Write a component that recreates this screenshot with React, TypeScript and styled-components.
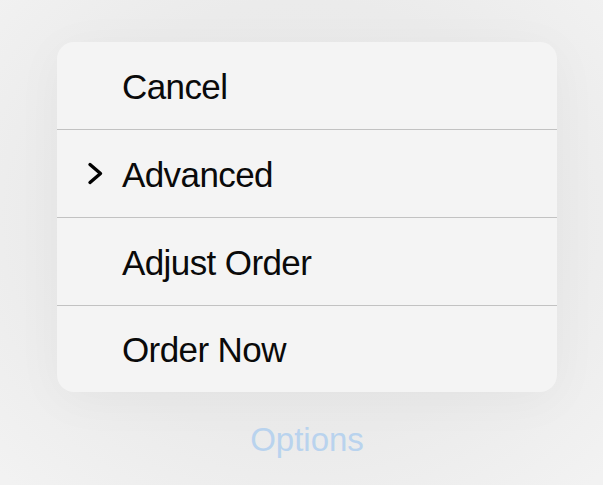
import React from "react";
import styled, { createGlobalStyle } from "styled-components";

const GlobalStyle = createGlobalStyle`
  html, body {
    margin: 0;
    padding: 0;
    background: #f2f2f2;
    font-family: "Liberation Sans", Arial, sans-serif;
  }
`;

const Page = styled.div`
  width: 603px;
  height: 485px;
  overflow: hidden;
  box-sizing: border-box;
  padding: 42px 0 0 57px;
  background: radial-gradient(ellipse 70% 75% at 50% 45%, #e8e8e8 0%, #ebebeb 60%, #f2f2f2 100%);
`;

const Column = styled.div`
  width: 500px;
  display: flex;
  flex-direction: column;
  align-items: center;
`;

const Card = styled.div`
  width: 500px;
  background: #f4f4f4;
  border-radius: 17px;
  overflow: hidden;
  box-shadow: 0 8px 50px rgba(0, 0, 0, 0.04);
  display: flex;
  flex-direction: column;
`;

const Row = styled.div<{ $last?: boolean }>`
  height: 87px;
  display: flex;
  align-items: center;
  padding-left: 30px;
  border-bottom: ${(p) => (p.$last ? "none" : "1px solid #c2c2c2")};
  &:last-child {
    height: 86px;
  }
`;

const IconSlot = styled.div`
  width: 35px;
  display: flex;
  align-items: center;
`;

const Label = styled.span`
  font-size: 35px;
  letter-spacing: -0.6px;
  color: #0a0a0a;
  line-height: 1;
  padding-top: 1px;
`;

const Footer = styled.div`
  margin-top: 31px;
  font-size: 33px;
  letter-spacing: 0px;
  color: #b9d3ee;
  line-height: 1;
`;

const Chevron = () => (
  <svg width="18" height="24" viewBox="0 0 18 24">
    <path
      d="M3 2.5 L13.5 11.5 L3 20.5"
      fill="none"
      stroke="#000"
      strokeWidth="3.4"
      strokeLinecap="round"
      strokeLinejoin="round"
    />
  </svg>
);

const items = [
  { label: "Cancel", chevron: false },
  { label: "Advanced", chevron: true },
  { label: "Adjust Order", chevron: false },
  { label: "Order Now", chevron: false },
];

export default function App() {
  return (
    <>
      <GlobalStyle />
      <Page>
        <Column>
          <Card>
            {items.map((it, i) => (
              <Row key={it.label} $last={i === items.length - 1}>
                <IconSlot>{it.chevron && <Chevron />}</IconSlot>
                <Label>{it.label}</Label>
              </Row>
            ))}
          </Card>
          <Footer>Options</Footer>
        </Column>
      </Page>
    </>
  );
}
